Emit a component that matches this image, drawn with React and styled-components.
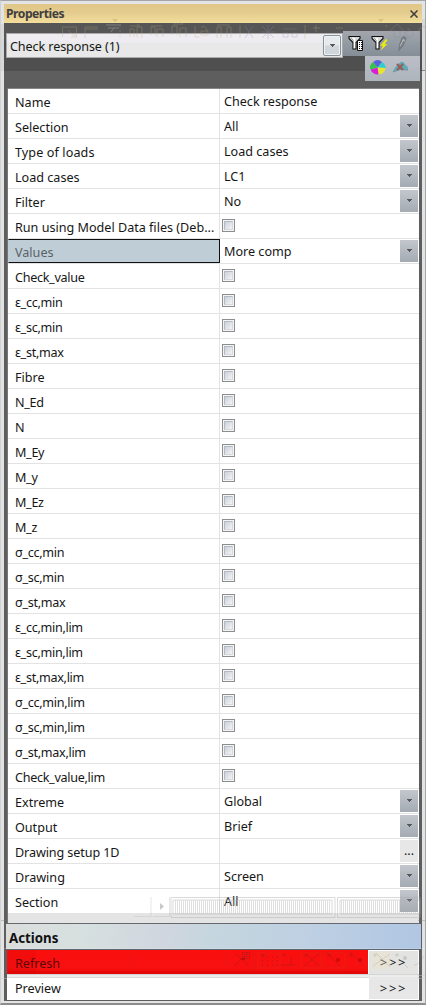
import React from "react";
import styled, { createGlobalStyle } from "styled-components";

const GlobalStyle = createGlobalStyle`
  *,
  *::after {
    box-sizing: border-box;
  }

  body {
    margin: 0;
    background: #5e5e5e;
    font-family: "Noto Sans", "Open Sans", sans-serif;
    font-size: 13px;
    color: #161616;
  }
`;

const Frame = styled.div`
  position: relative;
  width: 426px;
  height: 1005px;
  padding: 3px;
  overflow: hidden;
  background: #e2e3e5;
  border: 1px solid #a5a5a5;
  border-left-color: #d0d0d0;
  border-bottom: 2px solid #8d8d8d;
`;

const Panel = styled.div`
  display: flex;
  flex-direction: column;
  width: 418px;
  height: 997px;
  background: #5e5e5e;
`;

const TitleBar = styled.header`
  display: flex;
  align-items: center;
  justify-content: space-between;
  height: 19px;
  padding: 0 4px 0 2px;
  background: linear-gradient(#e1c687, #e4cd8f 50%, #f4de9b);
  color: #3f3f3f;
  font-weight: 700;
`;

const TitleText = styled.span`
  font-size: 12.2px;
  letter-spacing: -0.5px;
  line-height: 19px;
`;

const Toolbar = styled.div`
  display: flex;
  align-items: flex-start;
  height: 65px;
  padding: 8px 2px 0 2px;
  background: linear-gradient(#565656 0 18px, #4f4f4f 18px 47px, #5e5e5e 47px);
`;

const Combo = styled.div`
  display: flex;
  align-items: center;
  justify-content: space-between;
  flex: 1;
  height: 25px;
  margin-top: 2px;
  padding: 0 1px 0 3px;
  background: linear-gradient(#eeecf1 0 8px, #e8e8e8 9px);
  border: 1px solid #aaa;
`;

const ComboText = styled.span`
  padding-top: 2px;
  font-size: 12.6px;
  letter-spacing: -0.1px;
  line-height: 22px;
`;

const ComboButton = styled.div`
  display: flex;
  align-items: center;
  justify-content: center;
  width: 18px;
  height: 21px;
  border: 1px solid #87939b;
  border-radius: 2px;
  background: linear-gradient(#e7eaec 48%, #d0d6da 52%);
  box-shadow: inset 0 0 0 1px #eef2f4;
`;

const Tools = styled.div`
  display: flex;
  flex-direction: column;
  align-items: flex-end;
`;

const ToolRow = styled.div`
  display: flex;
  align-items: center;
  height: 25px;
  width: ${(props) => props.$width}px;
  padding: ${(props) => (props.$light ? "0 0 2px 4px" : "0 0 0 5px")};
  gap: 6px;
  background: ${(props) =>
    props.$light
      ? "linear-gradient(#bcbec6, #aeb5bd)"
      : "linear-gradient(#a3a6ac, #929ba3 50%, #858e97)"};
`;

const Grid = styled.section`
  height: 835px;
  width: 412px;
  margin-left: 3px;
  border-top: 1px solid #888;
  border-left: 1px solid #777;
  background: #fff;
`;

const Row = styled.div`
  display: grid;
  grid-template-columns: 212px 1fr;
  height: 25px;
  border-bottom: 1px solid #e3e3e3;

  &:last-child {
    border-bottom: 0;
  }
`;

const Label = styled.div`
  height: 24px;
  padding: 1px 0 0 7px;
  border-right: 1px solid #e3e3e3;
  font-size: 12.6px;
  letter-spacing: ${(props) => props.$spacing};
  line-height: 26px;
  white-space: nowrap;

  ${(props) =>
    props.$selected &&
    `
    padding: 0 0 0 6px;
    border: 1px solid #111;
    border-left-color: #bfced6;
    background: #bfced6;
    color: #596269;
    line-height: 25px;
  `}
`;

const Value = styled.div`
  display: flex;
  justify-content: space-between;
  height: 24px;
  padding: 0 1px 0 4px;
  font-size: 12.6px;
  line-height: 25px;
`;

const DropButton = styled.div`
  display: flex;
  align-items: center;
  justify-content: center;
  width: 18px;
  height: 22px;
  margin-top: 1px;
  padding-bottom: ${(props) => (props.$plain ? 0 : 1)}px;
  background: ${(props) =>
    props.$plain ? "#e7e7e7" : "linear-gradient(#c3c7cd, #a4abb3)"};
  line-height: 24px;
`;

const CheckBox = styled.div`
  width: 13px;
  height: 13px;
  margin: 5px 0 0 -2px;
  padding: 1px;
  border: 1px solid #8b8d8e;
  background: #f4f4f4;

  &::after {
    content: "";
    display: block;
    width: 9px;
    height: 9px;
    border: 1px solid #b3bac4;
    border-right-color: #d5d8dc;
    border-bottom-color: #d5d8dc;
    background: linear-gradient(135deg, #cbd0da, #f4f4f4);
  }
`;

const ActionsHeader = styled.div`
  height: 26px;
  width: 415px;
  margin-left: 2px;
  padding-left: 3px;
  border-top: 1px solid #66696d;
  background: linear-gradient(
    100deg,
    #dcdddd 0%,
    #d6e0df 18%,
    #d0d6df 38%,
    #c5d6df 50%,
    #bed0e2 72%,
    #b0c6e3 100%
  );
  color: #111;
  font-size: 13.3px;
  font-weight: 700;
  line-height: 28px;
`;

const ActionRow = styled.div`
  display: flex;
  justify-content: space-between;
  width: 412px;
  height: ${(props) => (props.$active ? 25 : 26)}px;
  margin-left: 3px;
  border-top: 1px solid #5d6770;
  background: #fff;

  ${(props) =>
    !props.$active &&
    `
    border-top: 0;
    padding-top: 1px;
    background: linear-gradient(#d5d5d5 0 1px, #ededed 1px 3px, #dadada 3px 4px, #fff 4px);
  `}
`;

const ActionName = styled.div`
  width: 361px;
  height: 24px;
  padding-left: 8px;
  background: ${(props) =>
    props.$active
      ? "linear-gradient(#fa0e0e, #f81010 75%, #e80909)"
      : "transparent"};
  color: ${(props) => (props.$active ? "#5c0808" : "#161616")};
  font-size: 12.6px;
  line-height: 27px;
`;

const ActionButton = styled.div`
  width: 49px;
  margin-right: 1px;
  height: ${(props) => (props.$active ? 23 : 22)}px;
  margin-top: ${(props) => (props.$active ? 1 : 2)}px;
  background: ${(props) => (props.$active ? "#e3e3e2" : "#e7e7e7")};
  font-size: 13px;
  letter-spacing: 1.8px;
  line-height: 23px;
  text-align: center;
`;

const Overlay = styled.svg`
  position: absolute;
  top: -1px;
  left: -1px;
  pointer-events: none;
`;

const check = (label) => ({ label, type: "check" });
const select = (label, value, selected) => ({
  label,
  value,
  selected,
  type: "select",
});

const rows = [
  { label: "Name", value: "Check response", type: "text" },
  select("Selection", "All"),
  { ...select("Type of loads", "Load cases"), spacing: "0.1px" },
  select("Load cases", "LC1"),
  select("Filter", "No"),
  check("Run using Model Data files (Deb..."),
  select("Values", "More comp", true),
  check("Check_value"),
  check("ε_cc,min"),
  check("ε_sc,min"),
  check("ε_st,max"),
  check("Fibre"),
  check("N_Ed"),
  check("N"),
  check("M_Ey"),
  check("M_y"),
  check("M_Ez"),
  check("M_z"),
  check("σ_cc,min"),
  check("σ_sc,min"),
  check("σ_st,max"),
  check("ε_cc,min,lim"),
  check("ε_sc,min,lim"),
  check("ε_st,max,lim"),
  check("σ_cc,min,lim"),
  check("σ_sc,min,lim"),
  check("σ_st,max,lim"),
  check("Check_value,lim"),
  select("Extreme", "Global"),
  select("Output", "Brief"),
  { label: "Drawing setup 1D", value: "", type: "more", spacing: "-0.1px" },
  select("Drawing", "Screen"),
  select("Section", "All"),
];

const Arrow = () => (
  <svg width="5" height="3" viewBox="0 0 5 3" shapeRendering="crispEdges">
    <path d="M0 0h5v1h-1v1h-1v1h-1v-1h-1v-1h-1z" fill="#56595c" />
  </svg>
);

const Close = () => (
  <svg width="8" height="8" viewBox="0 0 8 8">
    <path d="M.5.5l7 7M7.5.5l-7 7" stroke="#3c3c3c" strokeWidth="1.5" />
  </svg>
);

const Funnel = () => (
  <>
    <path
      d="M1 1.5h11v2l-4 4v6.500h-3v-6.500l-4-4z"
      fill="#d8d8d8"
      stroke="#111"
      strokeWidth="1.1"
    />
    <path d="M3 2.500l3 4v7" stroke="#999" fill="none" />
    <path d="M6.5 3v10M4.500 2.500l2 3" stroke="#fff" strokeWidth="1.3" />
  </>
);

const FilterTable = () => (
  <svg width="17" height="17" viewBox="0 0 17 17">
    <Funnel />
    <path d="M9.5 5.5h5v10h-5z" fill="#fff" stroke="#111" />
    <path
      d="M11.500 7v8M13.500 7v8"
      stroke="#111"
      strokeDasharray="1 1"
      shapeRendering="crispEdges"
    />
  </svg>
);

const FilterFlash = () => (
  <svg width="17" height="17" viewBox="0 0 17 17">
    <Funnel />
    <path d="M15 4L9 11l3-.5L9.500 15.500l7-6.500-3 .3L16.500 5z" fill="#f1ed0b" />
  </svg>
);

const Pencil = () => (
  <svg width="17" height="17" viewBox="0 0 17 17">
    <path
      d="M8 3l2-1.500 2 2-3 7-4 4.500.5-5z"
      fill="#7f868c"
      stroke="#70777d"
      strokeWidth="1.1"
    />
    <path d="M6 11l4-7M8 5l3 1" stroke="#b3b8bb" fill="none" />
  </svg>
);

const Wheel = () => (
  <svg width="17" height="15" viewBox="0 0 17 15">
    <path d="M8.500 7.500L4 2q5-4 9 0z" fill="#5860dd" />
    <path d="M8.500 7.500L13 2q4 3 3.500 6z" fill="#2bd0cc" />
    <path d="M8.500 7.500l8 .5q-1 6-7 6.500z" fill="#e6e632" />
    <path d="M8.500 7.500l1 7q-6 0-8-5z" fill="#d61edb" />
    <path d="M8.500 7.500l-7 2Q-.5 5 4 2z" fill="#35c34b" />
  </svg>
);

const ClearResult = () => (
  <svg width="17" height="15" viewBox="0 0 17 15">
    <path d="M.5 12q3-6 6-8 4-5 7 1 3 1 2.500 5-7 0-8.500-1z" fill="#5faab5" />
    <path d="M1 12q7-4 15-2" fill="none" stroke="#6c969f" />
    <path d="M5 4l6 6M11 4l-6 6" stroke="#955e59" strokeWidth="2.2" />
  </svg>
);

const GhostChrome = () => (
  <Overlay width="426" height="1005" viewBox="0 0 426 1005">
    <path d="M0 24h4v47h-4zM422 19h4v52h-4z" fill="#999" opacity=".16" />
    <path d="M4 70.500h361M420 70.500h6" stroke="#444" opacity=".55" />
    <path d="M112 19h6l-3 3zM378 19h6l-3 3z" fill="#c4a765" opacity=".5" />
    <g fill="none" stroke="#b9ab7c" opacity=".3">
      <path d="M62.500 37v-10h14v11M68 30l7 7M75 33v4h-4M85 38V27h13M85 29h13" />
      <path d="M106 25h15M108 28h11M111 32l3-4M110 38l3-3" stroke="#ddd" />
      <path d="M120 25v12" strokeDasharray="2 3" />
      <path d="M130 37v-8h4v8M137 37V27h5v11M130 26h10l-3-2M151 35v-8h4v8M157 37v-8h6v8M151 26h11M172 35v-9h5v9M180 37v-9h6v9M173 24h10l-3-2M195 26v11h4M201 35h7v-4h-7zM201 27q6-2 6 5" />
      <path d="M217 38V27h4v11M227 38V27h4v11M217 25h13M240 25v13" />
      <path
        d="M245 26l8 12M253 26l-8 12M261 32h14M268 25v14M262 26l12 12M274 26l-12 12M283 29h14M283 33h5v4h-5zM292 33h5v4h-5z"
        stroke="#9090a8"
      />
      <path d="M305 25v14M313 28h7M316 25v7M336 28h7" />
      <path d="M386 25v14" strokeDasharray="2 4" />
      <path
        d="M394 37v-6h-4l7-7 7 7h-4v6zM405 32h3v-4l6 6-6 5v-4h-3z"
        stroke="#888899"
      />
      <path d="M419 37v-8l6-3 1 11" stroke="#999" />
    </g>

    <path d="M7 913h413v10H7z" fill="#777" opacity=".2" />
    <path d="M0 920.500h7M418 920.500h8" stroke="#777" opacity=".35" />
    <path
      d="M134 916.500h17V897M153 916.500h17M169.500 897v19"
      fill="none"
      stroke="#bbb"
      opacity=".35"
    />
    <path d="M160 903v7l4-3.500z" fill="#aaa" opacity=".65" />
    <g fill="none" opacity=".42" stroke="#aaa">
      <path d="M171 897.500h164v20H171zM337.500 897.500H420v20h-82.500zM173 900h159v14H173zM340 900h80v14h-80z" />
      <path
        d="M175 907h155M341 907h80"
        strokeWidth="14"
        strokeDasharray="1 1"
        stroke="#b4b4b4"
      />
    </g>
    <path d="M0 948.500h426" stroke="#fff" opacity=".15" />
    <path d="M8 971h360v3H8z" fill="#c70000" opacity=".2" />
    <path d="M8 950h28v24H8z" fill="#a50000" opacity=".08" />
    <path
      d="M131.500 953v13M254 950v22M226.500 953v13"
      stroke="#ab3333"
      opacity=".3"
    />
    <g fill="none" stroke="#8e2020" opacity=".38">
      <path d="M235 953l14 13M248 953l-14 13M242.500 952.500h7v6h-7zM244 954.500h4M244 956.500h4" />
      <path
        d="M262 957h16M262 961h16M262 965h16"
        strokeDasharray="1 4"
        strokeWidth="2"
      />
      <path d="M281 965h14M291 957v8M304 966l16-13M306 954l13 12M326 952l14 14M350 952l14 14" />
      <path d="M261 955h4M263 953v4M282 955h4M284 953v4M304 955h4M306 953v4M327 955h4M329 953v4M349 955h4M351 953v4" />
      <path
        d="M258 953h22v15h-22zM301 953h20v15h-20zM324 953h21v15h-21z"
        stroke="#aa6a22"
        opacity=".4"
      />
    </g>
    <path
      d="M336 960a2 2 0 104 0 2 2 0 10-4 0M358 960a2 2 0 104 0 2 2 0 10-4 0M240 960h5v-3"
      fill="#900"
      opacity=".4"
    />
    <path d="M371 952h20v17h-20z" fill="#f2e7bd" opacity=".3" />
    <path
      d="M373 966l17-12M376 953l14 14M399 959l9 9M414 965q5 0 10-9M373 955h4M375 953v4M395 955h4M397 953v4"
      fill="none"
      stroke="#777"
      opacity=".2"
    />
    <circle cx="405" cy="958" r="2" fill="#777" opacity=".25" />
    <path
      d="M418 975.500h8M418 978.500h8M0 978.500h7"
      stroke="#ccc"
      opacity=".45"
    />
  </Overlay>
);

const PropertyRow = ({ label, value, type, selected, spacing }) => (
  <Row>
    <Label
      $selected={selected}
      $spacing={spacing || (label.includes("_") ? "-0.3px" : "0")}
    >
      {label}
    </Label>
    <Value>
      {type === "check" ? <CheckBox /> : <span>{value}</span>}
      {type === "select" && (
        <DropButton>
          <Arrow />
        </DropButton>
      )}
      {type === "more" && <DropButton $plain>...</DropButton>}
    </Value>
  </Row>
);

const App = () => {
  return (
    <>
      <GlobalStyle />
      <Frame>
        <Panel>
          <TitleBar>
            <TitleText>Properties</TitleText>
            <Close />
          </TitleBar>
          <Toolbar>
            <Combo>
              <ComboText>Check response (1)</ComboText>
              <ComboButton>
                <Arrow />
              </ComboButton>
            </Combo>
            <Tools>
              <ToolRow $width={77}>
                <FilterTable />
                <FilterFlash />
                <Pencil />
              </ToolRow>
              <ToolRow $width={55} $light>
                <Wheel />
                <ClearResult />
              </ToolRow>
            </Tools>
          </Toolbar>
          <Grid>
            {rows.map((row) => (
              <PropertyRow key={row.label} {...row} />
            ))}
          </Grid>
          <ActionsHeader>Actions</ActionsHeader>
          <ActionRow $active>
            <ActionName $active>Refresh</ActionName>
            <ActionButton $active>&gt;&gt;&gt;</ActionButton>
          </ActionRow>
          <ActionRow>
            <ActionName>Preview</ActionName>
            <ActionButton>&gt;&gt;&gt;</ActionButton>
          </ActionRow>
        </Panel>
        <GhostChrome />
      </Frame>
    </>
  );
};

export default App;
